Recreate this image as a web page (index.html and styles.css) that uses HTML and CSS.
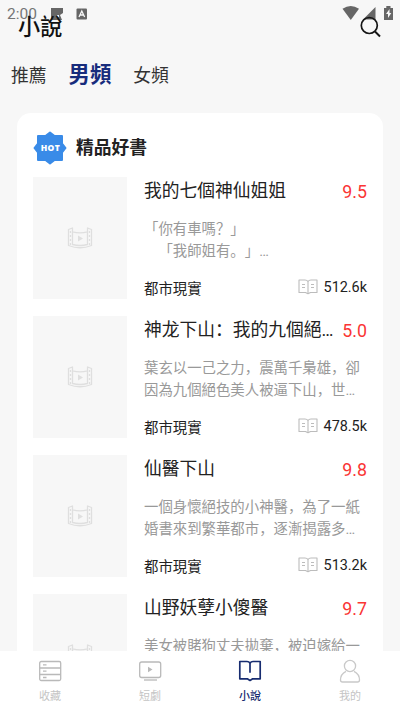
FILE: index.html
```html
<!DOCTYPE html>
<html lang="zh">
<head>
<meta charset="utf-8">
<meta name="viewport" content="width=device-width">
<title>小說</title>
<link rel="stylesheet" href="styles.css">
</head>
<body>
<svg class="defs" width="0" height="0" aria-hidden="true">
  <symbol id="film" viewBox="0 0 26 22">
    <g fill="none" stroke="#dfdfdf" stroke-width="1.3" stroke-linejoin="round">
      <path d="M1.5 2.5 5.5 1v3.800q7.500 2.200 15 0V1l4 1.500v16q-11.500 4.500-23 0z"/>
      <path d="M5.500 5v12.500q7.500 2 15 0V5"/>
      <path d="M3.500 4v14M22.500 4v14" stroke-dasharray="2 2"/>
    </g>
    <path d="M11 8.500v6l5-3z" fill="#dfdfdf"/>
  </symbol>
  <symbol id="reads" viewBox="0 0 20 16">
    <g fill="none" stroke="#bcbcbc" stroke-width="1.1" stroke-linejoin="round">
      <path d="M10 2.500Q9 1 7 1H1v12.500h6.500l2.500 1.300 2.500-1.300H19V1h-6q-2 0-3 1.500z"/>
      <path d="M10 2.500v12M4 5.500h3M4 8.500h3M13 5.500h3M13 8.500h3"/>
    </g>
  </symbol>
</svg>
<div class="status">
  <span class="clock">2:00</span>
  <svg class="notices" width="38" height="14" viewBox="0 0 38 14">
    <path d="M1 1h12v5l-3 2 2 5H1z" fill="#666"/>
    <path d="M7 8h2v2H7z" fill="#f7f7f7"/>
    <rect x="26.500" y="1.500" width="10.500" height="11" rx="1" fill="#666"/>
    <path d="m29 10 2.800-6 2.800 6M30 8h3.500" fill="none" stroke="#f7f7f7" stroke-width="1.300"/>
  </svg>
  <svg class="signals" width="52" height="16" viewBox="0 0 52 16">
    <path d="M.5 3.800q8.300-5.500 16.500 0L8.800 15z" fill="#666"/>
    <path d="M33.500 2v12.500H21z" fill="#666"/>
    <path d="M42 3h2.300V1h4.200v2H51v12h-9z" fill="#666"/>
    <path d="m47.500 4-3.500 5h2v4l3.300-5h-1.800z" fill="#f7f7f7"/>
  </svg>
</div>
<header class="top">
  <h1>小說</h1>
  <svg width="22" height="22" viewBox="0 0 22 22" fill="none" stroke="#151515">
    <circle cx="9.300" cy="9.500" r="8" stroke-width="1.700"/>
    <path d="m15 15.500 5 5" stroke-width="2"/>
  </svg>
</header>
<nav class="tabs"><span>推薦</span><b>男頻</b><span>女頻</span></nav>
<main class="card">
  <div class="heading">
    <svg width="34" height="34" viewBox="0 0 34 34">
      <path d="M17 1.500 21.500 5H29v7.500l3.500 4.500-3.500 4.500V29h-7.500L17 32.500 12.500 29H5v-7.500L1.500 17 5 12.500V5h7.500z" fill="#398be8" stroke="#398be8" stroke-width="2" stroke-linejoin="round"/>
      <text class="hot" x="17.200" y="20.300" text-anchor="middle" textLength="19">HOT</text>
    </svg>
    <h2>精品好書</h2>
  </div>
  <article class="book">
    <div class="cover"><svg width="26" height="22"><use href="#film"/></svg></div>
    <div class="info">
      <div class="row"><h3>我的七個神仙姐姐</h3><span class="score">9.5</span></div>
      <p>「你有車嗎？」<br>　「我師姐有。」…</p>
      <div class="row meta"><span>都市現實</span><span class="count"><svg width="20" height="16"><use href="#reads"/></svg>512.6k</span></div>
    </div>
  </article>
  <article class="book">
    <div class="cover"><svg width="26" height="22"><use href="#film"/></svg></div>
    <div class="info">
      <div class="row"><h3>神龙下山：我的九個絕…</h3><span class="score">5.0</span></div>
      <p>葉玄以一己之力，震萬千梟雄，卻<br>因為九個絕色美人被逼下山，世…</p>
      <div class="row meta"><span>都市現實</span><span class="count"><svg width="20" height="16"><use href="#reads"/></svg>478.5k</span></div>
    </div>
  </article>
  <article class="book">
    <div class="cover"><svg width="26" height="22"><use href="#film"/></svg></div>
    <div class="info">
      <div class="row"><h3>仙醫下山</h3><span class="score">9.8</span></div>
      <p>一個身懷絕技的小神醫，為了一紙<br>婚書來到繁華都市，逐漸揭露多…</p>
      <div class="row meta"><span>都市現實</span><span class="count"><svg width="20" height="16"><use href="#reads"/></svg>513.2k</span></div>
    </div>
  </article>
  <article class="book">
    <div class="cover"><svg width="26" height="22"><use href="#film"/></svg></div>
    <div class="info">
      <div class="row"><h3>山野妖孽小傻醫</h3><span class="score">9.7</span></div>
      <p>美女被賭狗丈夫拋棄，被迫嫁給一</p>
    </div>
  </article>
</main>
<footer class="bottom">
  <div class="item">
    <svg width="24" height="24" viewBox="0 0 24 24" fill="none" stroke="#b9b9b9" stroke-width="1.300"><rect x="1.700" y="2.500" width="21" height="19" rx="1.500"/><path d="M1.700 9h21M1.700 15.500h21M5 5.800h3.500M5 12.200h3.500M5 18.500h3.500"/></svg>
    <span>收藏</span>
  </div>
  <div class="item">
    <svg width="24" height="24" viewBox="0 0 24 24" fill="none" stroke="#b9b9b9" stroke-width="1.300"><rect x="1.700" y="3" width="21" height="15.500" rx="2"/><path d="M6 21h13"/><path d="M10 7.800v5.400l4.500-2.700z" fill="#b9b9b9" stroke="none"/></svg>
    <span>短劇</span>
  </div>
  <div class="item active">
    <svg width="24" height="24" viewBox="0 0 24 24" fill="none" stroke="#172c70" stroke-width="1.700" stroke-linejoin="round"><path d="M12 4.200Q11 2.500 9 2.500H1.800v17.300h7.500l2.700 1.700 2.700-1.700h7.500V2.500H15q-2 0-3 1.700v9.500"/></svg>
    <span>小說</span>
  </div>
  <div class="item">
    <svg width="24" height="24" viewBox="0 0 24 24" fill="none" stroke="#c9c9c9" stroke-width="1.300"><circle cx="12" cy="7" r="5.600"/><path d="M8 12.300Q2.500 15 2.500 21q0 2 2 2h15q2 0 2-2 0-6-5.500-8.700"/></svg>
    <span>我的</span>
  </div>
</footer>
</body>
</html>
```
FILE: styles.css
```css
* { box-sizing: border-box; }
body {
  margin: 0;
  height: 711px;
  overflow: hidden;
  display: flex;
  flex-direction: column;
  background: #f7f7f7;
  color: #222;
  font-family: Roboto, "Noto Sans CJK SC", sans-serif;
  text-spacing-trim: space-all;
}
h1, h2, h3, p { margin: 0; }
svg { display: block; flex: none; }
.defs { position: absolute; }
.status {
  position: absolute;
  top: 0;
  left: 0;
  width: 400px;
  height: 28px;
  padding: 5px 6px 0 7px;
  display: flex;
}
.clock { width: 43px; font-size: 15.5px; line-height: 18px; color: #757575; }
.notices { margin-top: 2px; }
.signals { margin-left: auto; }
.top {
  position: relative;
  flex: none;
  height: 54px;
  padding: 0 18px 0 18px;
  display: flex;
  align-items: center;
  justify-content: space-between;
}
.top h1 { font-size: 22.200px; font-weight: 500; line-height: 30px; color: #111; }
.tabs {
  flex: none;
  height: 59px;
  padding: 6px 11px 0;
  display: flex;
  align-items: flex-start;
  gap: 22px;
  font-size: 17.800px;
  line-height: 32px;
  color: #333;
}
.tabs b { font-size: 21.300px; color: #172c7c; line-height: 30px; }
.card {
  flex: 1;
  min-height: 0;
  overflow: hidden;
  margin: 0 17px;
  padding: 18px 16px 0;
  background: #fff;
  border-radius: 14px 14px 0 0;
}
.heading { height: 46px; display: flex; gap: 9px; }
.heading h2 { font-size: 17.800px; line-height: 34px; font-weight: 700; }
.hot { font: 900 8.500px "Open Sans", sans-serif; fill: #fff; }
.book { height: 139px; display: flex; gap: 17px; }
.cover {
  width: 94px;
  height: 122px;
  background: #f7f7f7;
  display: flex;
  align-items: center;
  justify-content: center;
}
.info { width: 223px; }
.row { display: flex; justify-content: space-between; align-items: center; white-space: nowrap; }
.row h3 { font-size: 17.750px; font-weight: 400; line-height: 28px; }
.score { font-size: 17.800px; color: #fa3534; }
.info p {
  margin-top: 14px;
  height: 44px;
  font-size: 14.400px;
  line-height: 21.500px;
  color: #999;
  white-space: nowrap;
}
.meta { margin-top: 13px; height: 22px; font-size: 14.400px; }
.count { display: flex; align-items: center; gap: 6px; }
.bottom {
  flex: none;
  height: 60px;
  background: #fff;
  display: flex;
}
.item {
  flex: 1;
  padding-top: 8px;
  display: flex;
  flex-direction: column;
  align-items: center;
  font-size: 11px;
  line-height: 16px;
  color: #c4c4c4;
}
.item span { margin-top: 6px; }
.active { color: #172c70; font-weight: 500; }
```
